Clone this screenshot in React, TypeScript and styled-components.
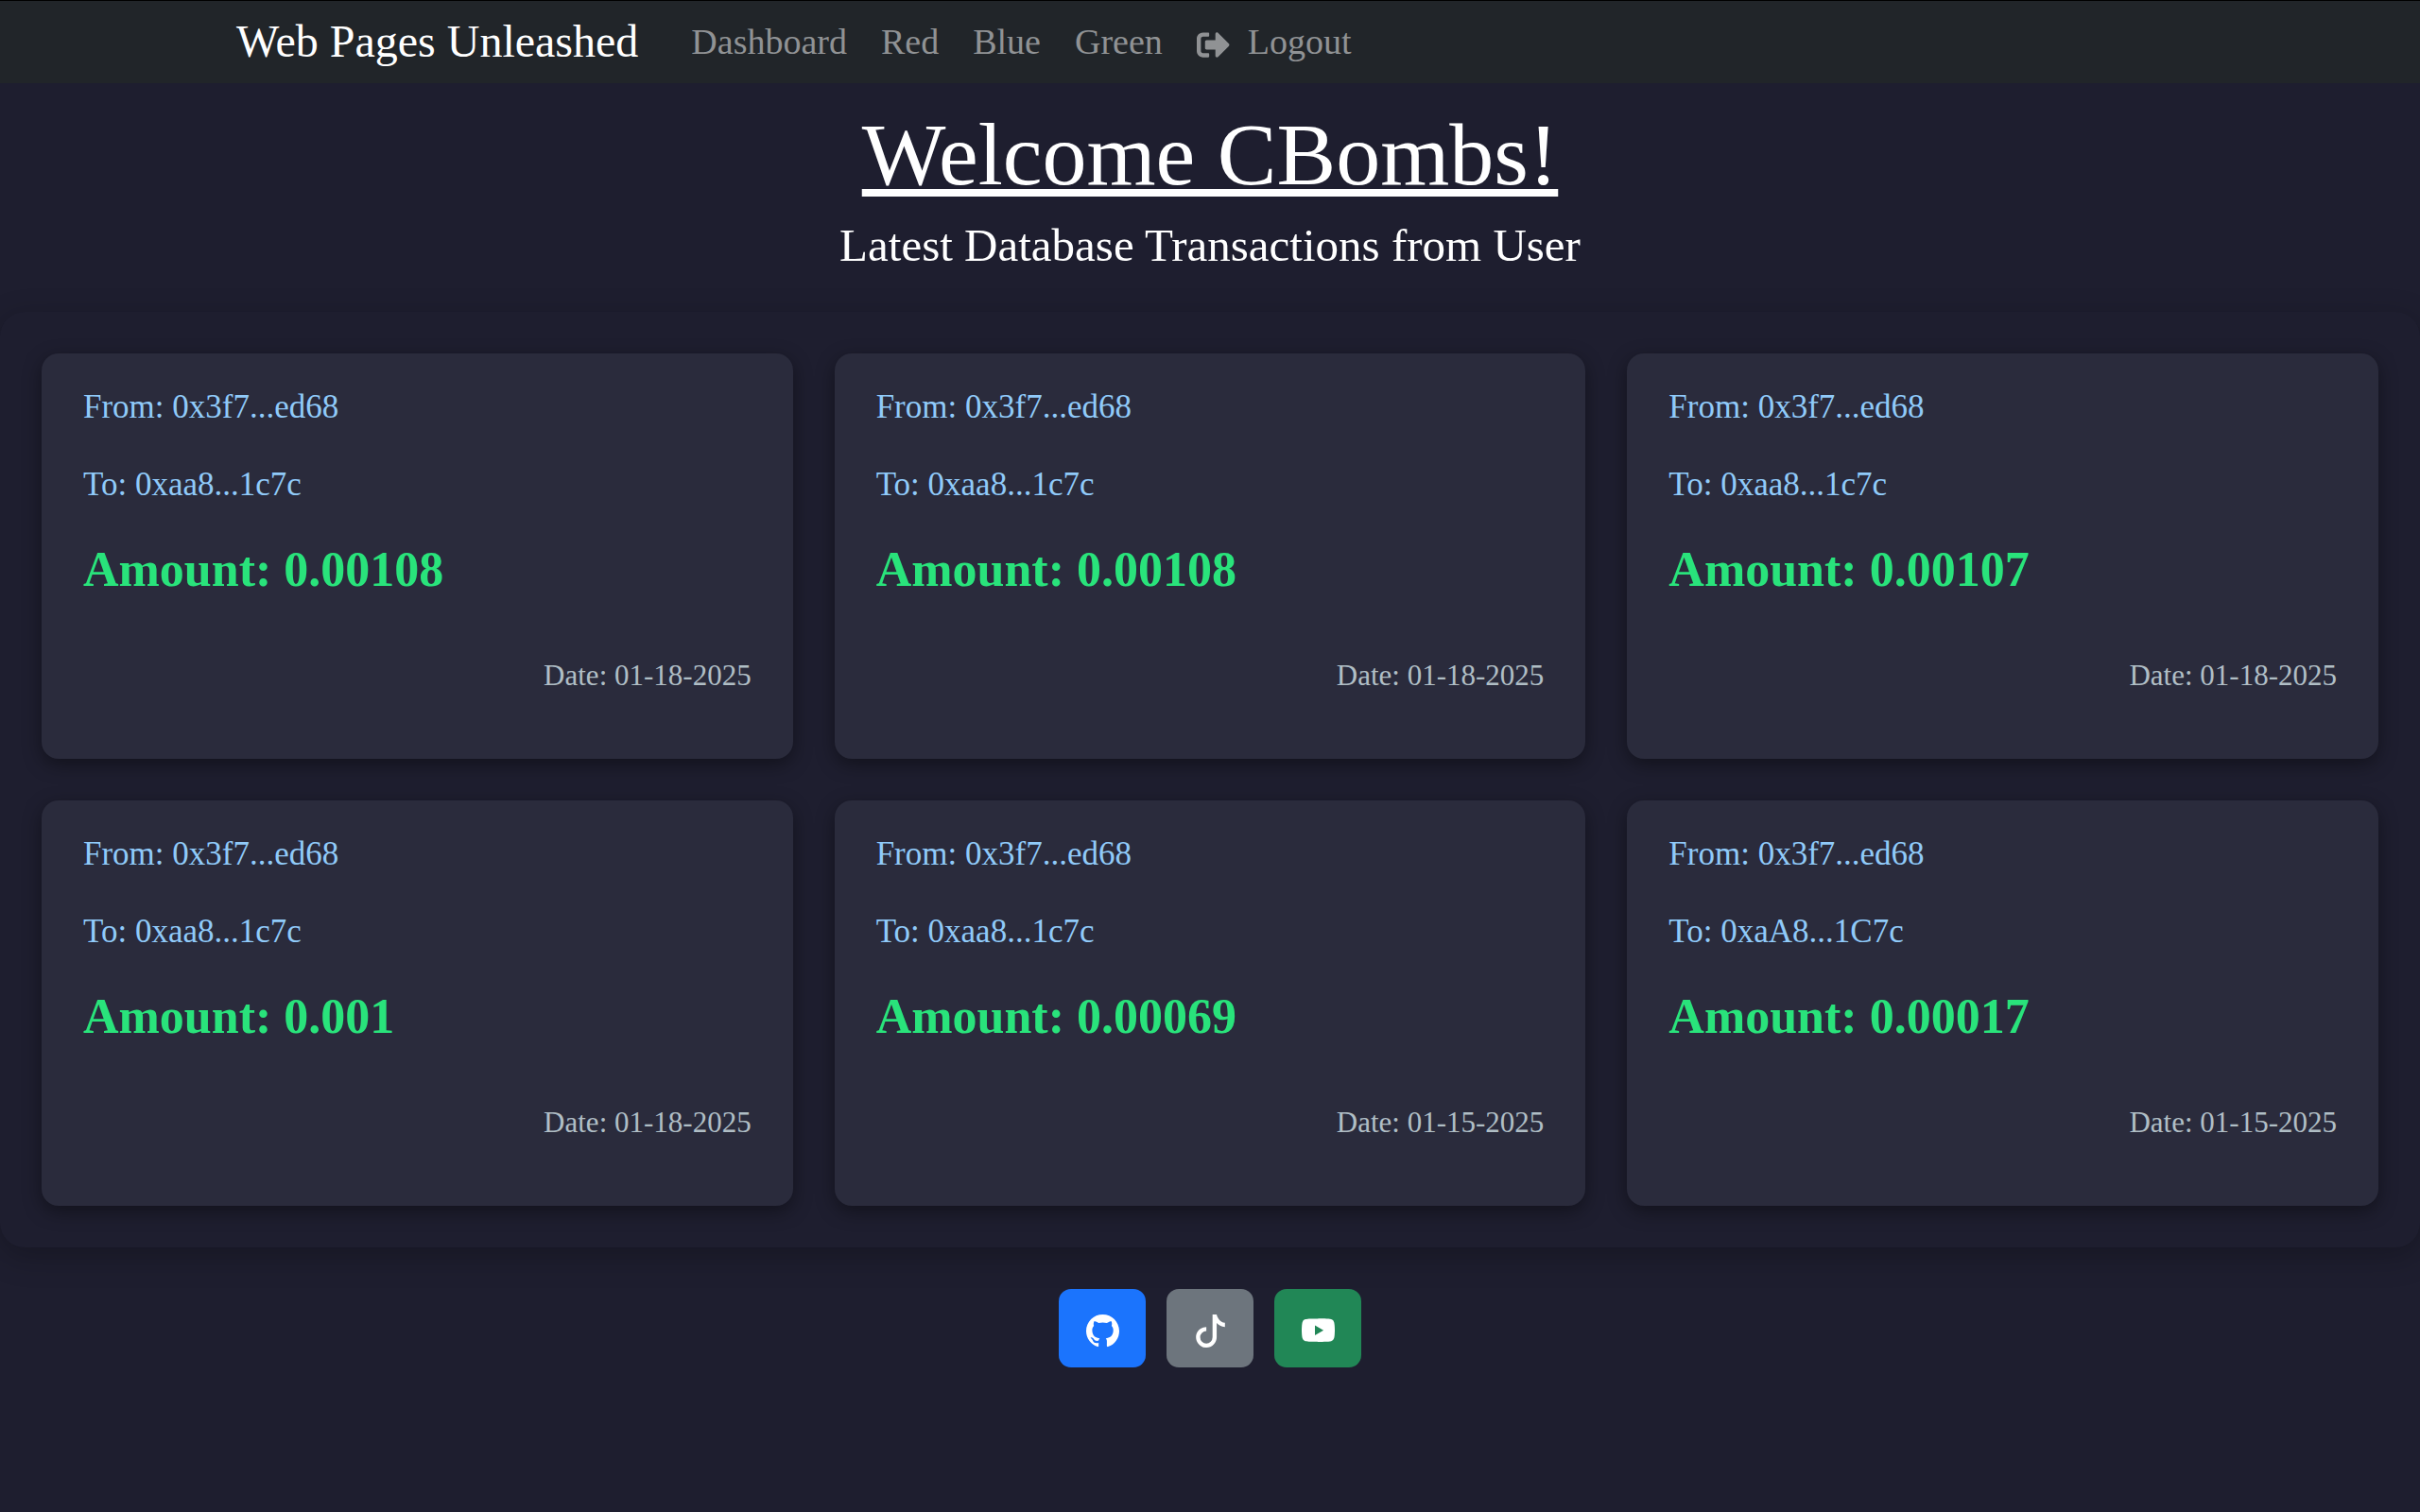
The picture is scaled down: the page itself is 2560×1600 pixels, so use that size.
import React from "react";
import styled, { createGlobalStyle } from "styled-components";
import { FaSignOutAlt } from "react-icons/fa";
import { BsGithub, BsTiktok, BsYoutube } from "react-icons/bs";

const GlobalStyle = createGlobalStyle`
  *, *::before, *::after { box-sizing: border-box; }
  body {
    margin: 0;
    min-height: 100vh;
    background: #1e1e2f;
    color: #ffffff;
    font-family: "Liberation Serif", serif;
  }
`;

const Navbar = styled.nav`
  background: #212529;
  border-top: 1px solid #000000;
`;

const NavInner = styled.div`
  display: flex;
  align-items: center;
  width: 100%;
  max-width: 2112px;
  height: 87px;
  margin: 0 auto;
  padding: 0 26px;
`;

const Brand = styled.a`
  margin-right: 38px;
  padding-bottom: 2px;
  color: #ffffff;
  font-size: 48px;
  line-height: 72px;
  text-decoration: none;
  white-space: nowrap;
`;

const NavList = styled.ul`
  display: flex;
  margin: 0;
  padding: 0;
  list-style: none;
`;

const NavLink = styled.a`
  display: flex;
  align-items: center;
  gap: 19px;
  padding: 0 18px 2px;
  color: #909294;
  font-size: 38px;
  line-height: 52px;
  text-decoration: none;
  white-space: nowrap;

  svg {
    width: 35px;
    height: 35px;
    margin-top: 8px;
  }
`;

const Intro = styled.header`
  padding: 22px 44px 44px;
  text-align: center;
`;

const Title = styled.h1`
  margin: 0 0 18px;
  font-size: 94px;
  font-weight: 400;
  line-height: 106px;
  text-decoration: underline;
  text-decoration-thickness: 8px;
  text-underline-offset: 5px;
  text-decoration-skip-ink: none;
`;

const Subtitle = styled.h2`
  margin: 0;
  font-size: 49px;
  font-weight: 400;
  line-height: 52px;
`;

const Transactions = styled.main`
  display: grid;
  grid-template-columns: repeat(3, minmax(0, 1fr));
  gap: 44px;
  padding: 44px;
  border-radius: 26px;
  background: #1e1e2f;
  box-shadow: 0 9px 33px rgba(0, 0, 0, 0.25);
`;

const Card = styled.article`
  display: flex;
  flex-direction: column;
  gap: 28px;
  padding: 30px 44px 65px;
  border-radius: 18px;
  background: #2a2b3c;
  box-shadow: 0 6px 20px rgba(0, 0, 0, 0.4);
`;

const Address = styled.p`
  margin: 0;
  color: #90caf9;
  font-size: 35px;
  line-height: 54px;
`;

const Amount = styled.p`
  margin: 0 0 26px;
  color: #29e37b;
  font-size: 52px;
  font-weight: 700;
  line-height: 70px;
`;

const DateText = styled.p`
  margin: 0;
  color: #b0bec5;
  font-size: 31px;
  line-height: 46px;
  text-align: right;
`;

const Footer = styled.footer`
  display: flex;
  justify-content: center;
  gap: 22px;
  padding: 44px;
`;

const SocialLink = styled.a<{ $color: string }>`
  display: flex;
  align-items: center;
  justify-content: center;
  width: 92px;
  height: 83px;
  padding-top: 6px;
  border-radius: 13px;
  background: ${(p) => p.$color};
  color: #ffffff;

  svg {
    width: 35px;
    height: 35px;
  }
`;

interface Transaction {
  from: string;
  to: string;
  amount: string;
  date: string;
}

const transactions: Transaction[] = [
  { from: "0x3f7...ed68", to: "0xaa8...1c7c", amount: "0.00108", date: "01-18-2025" },
  { from: "0x3f7...ed68", to: "0xaa8...1c7c", amount: "0.00108", date: "01-18-2025" },
  { from: "0x3f7...ed68", to: "0xaa8...1c7c", amount: "0.00107", date: "01-18-2025" },
  { from: "0x3f7...ed68", to: "0xaa8...1c7c", amount: "0.001", date: "01-18-2025" },
  { from: "0x3f7...ed68", to: "0xaa8...1c7c", amount: "0.00069", date: "01-15-2025" },
  { from: "0x3f7...ed68", to: "0xaA8...1C7c", amount: "0.00017", date: "01-15-2025" },
];

const pages = ["Dashboard", "Red", "Blue", "Green"];

export default function App() {
  return (
    <>
      <GlobalStyle />
      <Navbar>
        <NavInner>
          <Brand href="#">Web Pages Unleashed</Brand>
          <NavList>
            {pages.map((page) => (
              <li key={page}>
                <NavLink href={`#${page.toLowerCase()}`}>{page}</NavLink>
              </li>
            ))}
            <li>
              <NavLink href="#logout">
                <FaSignOutAlt aria-hidden="true" />
                Logout
              </NavLink>
            </li>
          </NavList>
        </NavInner>
      </Navbar>
      <Intro>
        <Title>Welcome CBombs!</Title>
        <Subtitle>Latest Database Transactions from User</Subtitle>
      </Intro>
      <Transactions>
        {transactions.map((tx, i) => (
          <Card key={i}>
            <Address>From: {tx.from}</Address>
            <Address>To: {tx.to}</Address>
            <Amount>Amount: {tx.amount}</Amount>
            <DateText>Date: {tx.date}</DateText>
          </Card>
        ))}
      </Transactions>
      <Footer>
        <SocialLink href="#github" aria-label="GitHub" $color="#1b74fd">
          <BsGithub />
        </SocialLink>
        <SocialLink href="#tiktok" aria-label="TikTok" $color="#6d757d">
          <BsTiktok />
        </SocialLink>
        <SocialLink href="#youtube" aria-label="YouTube" $color="#218756">
          <BsYoutube />
        </SocialLink>
      </Footer>
    </>
  );
}
